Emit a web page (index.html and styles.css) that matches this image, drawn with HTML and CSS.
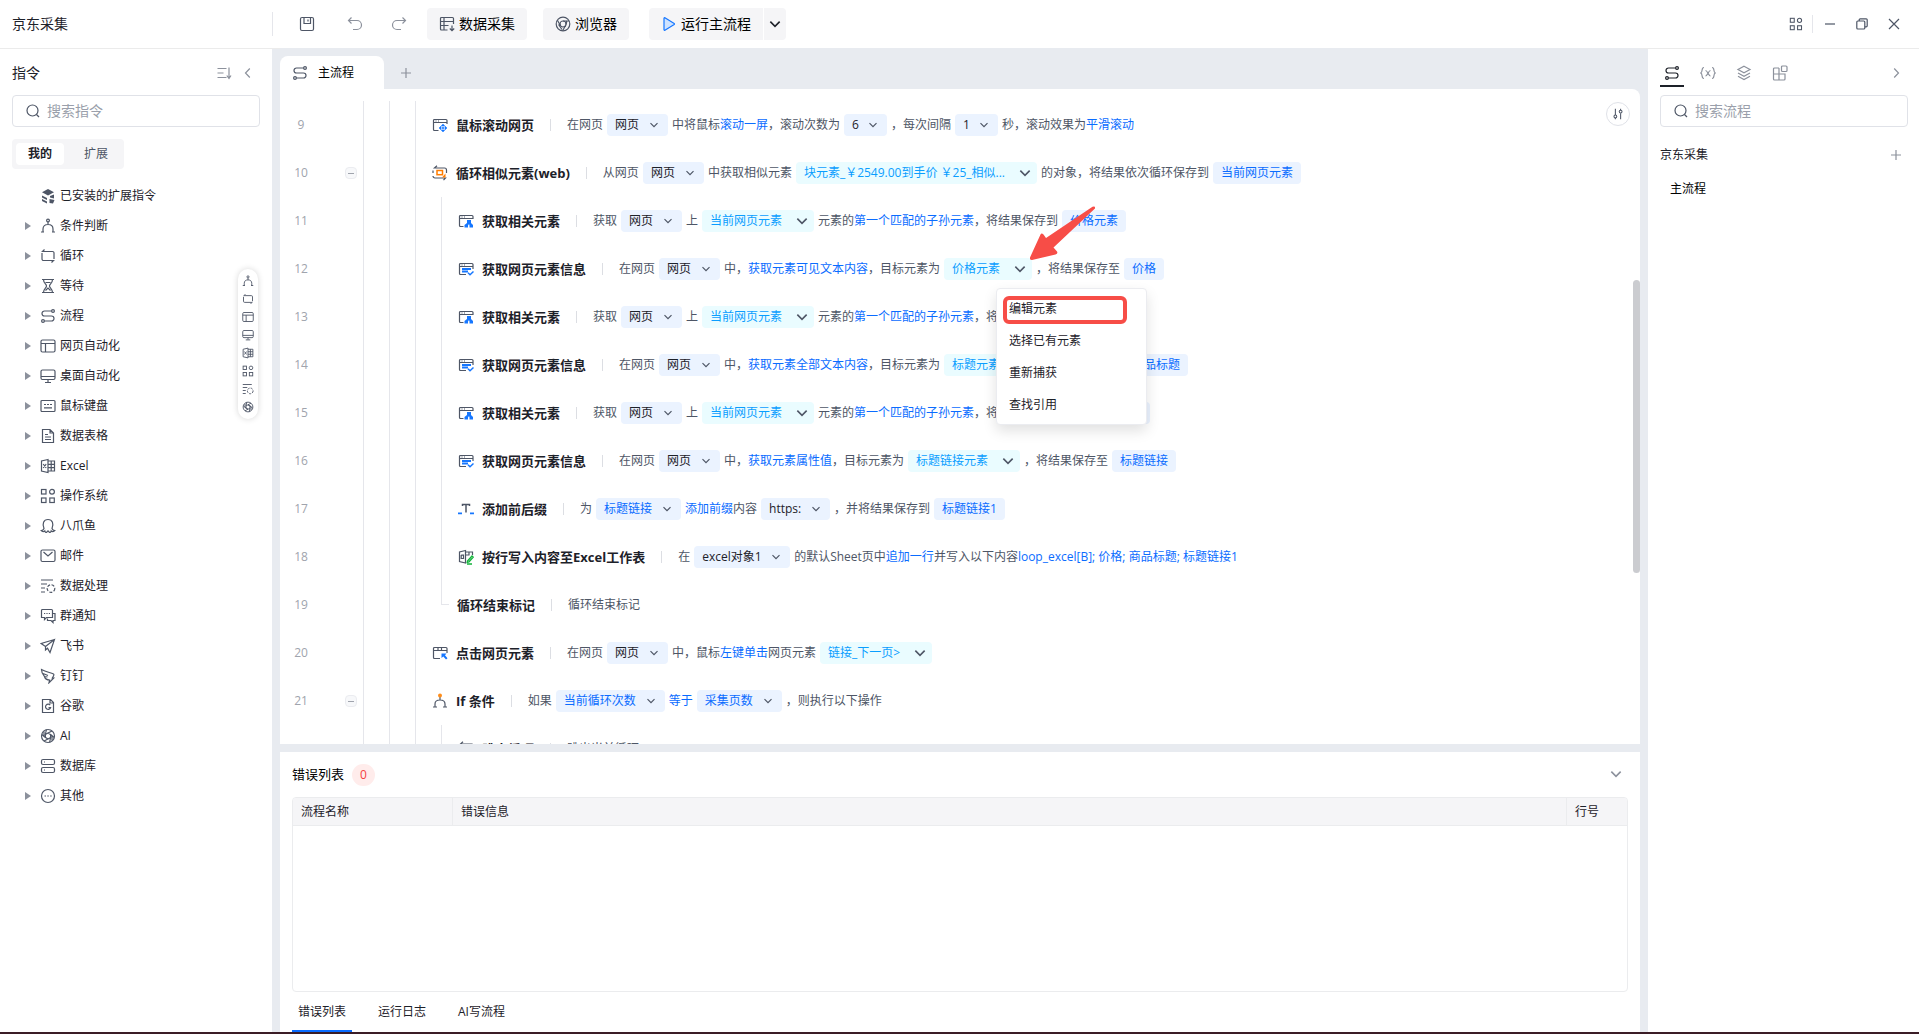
FILE: index.html
```html
<!DOCTYPE html>
<html lang="zh-CN">
<head>
    <meta charset="UTF-8">
    <meta name="viewport" content="width=device-width, initial-scale=1.0">
    <title>京东采集</title>
    <link rel="stylesheet" href="styles.css">
</head>
<body>
    <!-- icons -->
    <svg class="sprite" aria-hidden="true">
        <symbol id="i-save" viewBox="0 0 16 16"><rect x="1.5" y="1.5" width="13" height="13" rx="1.5"/><path d="M5 1.5v6h6.500v-6M9 3.500v2"/></symbol>
        <symbol id="i-undo" viewBox="0 0 16 16"><path d="M4.500 1.500L1.500 4.500l3 3M1.500 4.500h8.500a4.500 4.500 0 0 1 0 9H6"/></symbol>
        <symbol id="i-redo" viewBox="0 0 16 16"><path d="M11.500 1.500l3 3-3 3M14.500 4.500H6a4.500 4.500 0 0 0 0 9h4"/></symbol>
        <symbol id="i-collect" viewBox="0 0 16 16"><path d="M8.500 14H2.500a1 1 0 0 1-1-1V2.500a1 1 0 0 1 1-1h11a1 1 0 0 1 1 1V8M1.500 5.500h13M1.500 9.500h8M5 1.500V14M13 9.500v5M10.800 12.500l2.200 2.200 2.200-2.200"/></symbol>
        <symbol id="i-chrome" viewBox="0 0 16 16"><circle cx="8" cy="8" r="6.800"/><circle cx="8" cy="8" r="3"/><path d="M8 5h6M5.400 9.500L2.400 4.300M10.600 9.500l-3 5.200M3.500 8.500l3.500 5M12 4.500l-1 4"/></symbol>
        <symbol id="i-run" viewBox="0 0 16 16"><path d="M3 2.300v11.400a.6.6 0 0 0 .9.500l9.300-5.700a.6.6 0 0 0 0-1L3.900 1.800a.6.6 0 0 0-.9.500z" fill="#cfe3ff" stroke="#1677ff"/></symbol>
        <symbol id="i-down" viewBox="0 0 12 12"><path d="M2.500 4.200L6 7.700l3.500-3.500"/></symbol>
        <symbol id="i-left" viewBox="0 0 12 12"><path d="M7.800 1.500L3.500 6l4.300 4.500"/></symbol>
        <symbol id="i-right" viewBox="0 0 12 12"><path d="M4.200 1.500L8.500 6l-4.300 4.500"/></symbol>
        <symbol id="i-plus" viewBox="0 0 12 12"><path d="M6 1v10M1 6h10"/></symbol>
        <symbol id="i-min" viewBox="0 0 12 12"><path d="M1 6h10"/></symbol>
        <symbol id="i-restore" viewBox="0 0 12 12"><rect x=".8" y="3" width="8" height="8" rx="1"/><path d="M3.200 3V1.800a1 1 0 0 1 1-1h6a1 1 0 0 1 1 1v6a1 1 0 0 1-1 1H8.800"/></symbol>
        <symbol id="i-close" viewBox="0 0 12 12"><path d="M1 1l10 10M11 1L1 11"/></symbol>
        <symbol id="i-sort" viewBox="0 0 16 16"><path d="M1.500 3.500h9M1.500 8h6M1.500 12.500h9M13 2.500v11M10.800 10.500l2.200 3 2-3"/></symbol>
        <symbol id="i-search" viewBox="0 0 16 16"><circle cx="7.500" cy="7.500" r="5.500"/><path d="M11.500 11.500l2.500 2.500"/></symbol>
        <symbol id="i-adjust" viewBox="0 0 16 16"><path d="M5 2v7M5 12.500V14M11 7v7M11 2v1.500"/><circle cx="5" cy="10.800" r="1.600"/><circle cx="11" cy="5.200" r="1.600"/></symbol>
        <symbol id="i-var" viewBox="0 0 16 16"><path d="M4 2.500c-3 0-1 4.500-3.200 5.500C3 9 1 13.500 4 13.500M12 2.500c3 0 1 4.500 3.200 5.500C13 9 15 13.500 12 13.500M5.500 5.500c2 0 3 5.500 5 5.500M10.500 5.500c-2 0-3 5.500-5 5.500"/></symbol>
        <symbol id="i-layers" viewBox="0 0 16 16"><path d="M8 1.300l6 3.200-6 3.200-6-3.200zM2 8l6 3.200L14 8M2 11.300l6 3.200 6-3.200"/></symbol>
        <symbol id="i-blocks" viewBox="0 0 16 16"><rect x="9.500" y="1" width="5.500" height="5.500" rx="1"/><path d="M7 3H2.500a1 1 0 0 0-1 1v10a1 1 0 0 0 1 1h9.500a1 1 0 0 0 1-1V9H1.500M7 3v12"/></symbol>

        <symbol id="i-installed" viewBox="0 0 16 16"><path d="M8 1l6 3.200-6 3.200-6-3.200z" fill="currentColor" stroke="none"/><path d="M2 7.500l5 2.500v2L2 9.500zM2 11l5 2.500v2L2 13z" fill="currentColor" stroke="none"/><path d="M10 8l4-1.500v4L10 9.500zM9.500 11l5 1-1.500 3.500-3.500-.5z" fill="currentColor" stroke="none"/></symbol>
        <symbol id="i-branch" viewBox="0 0 16 16"><circle cx="8" cy="2.500" r="1.400"/><path d="M8 4v2.500M3 14v-3c0-3 2-4.500 5-4.500s5 1.500 5 4.500v3M1 14h3M12 14h3"/></symbol>
        <symbol id="i-loop" viewBox="0 0 16 16"><path d="M4.500 1.500L2.500 3.500H12.500a1.500 1.500 0 0 1 1.500 1.500v6M11.500 14.500l2-2H3.500A1.500 1.500 0 0 1 2 11V5"/></symbol>
        <symbol id="i-wait" viewBox="0 0 16 16"><path d="M2 1.500h12M2 14.500h12M3.500 1.500c0 4 3 4.500 3 6.500s-3 2.500-3 6.500M12.500 1.500c0 4-3 4.500-3 6.500s3 2.500 3 6.500M5.500 4.500h5M5.500 12.500L8 10l2.500 2.500"/></symbol>
        <symbol id="i-flow" viewBox="0 0 16 16"><circle cx="13" cy="3" r="1.400"/><circle cx="3" cy="13" r="1.400"/><path d="M11.500 3H4.500a2.500 2.500 0 0 0 0 5h7a2.500 2.500 0 0 1 0 5H4.500"/></symbol>
        <symbol id="i-web" viewBox="0 0 16 16"><rect x="1" y="2" width="14" height="12" rx="1.500"/><path d="M1 5.500h14M5.500 5.500V14"/></symbol>
        <symbol id="i-desktop" viewBox="0 0 16 16"><rect x="1" y="2" width="14" height="9.500" rx="1.500"/><path d="M1 8.500h14M8 11.500V14M5 14.500h6"/></symbol>
        <symbol id="i-keyboard" viewBox="0 0 16 16"><rect x="1" y="2.500" width="14" height="11" rx="1"/><path d="M4 6.500h2M7 6.500h2M10 6.500h2M4 9.800h8"/></symbol>
        <symbol id="i-doc" viewBox="0 0 16 16"><path d="M2.500 1.500h7.500l3.500 3.500v9.500h-11zM10 1.500V5h3.500M5 6.500h3M5 9h6M5 11.500h6"/></symbol>
        <symbol id="i-excel" viewBox="0 0 16 16"><path d="M8 1.500L1.500 3v10L8 14.500zM8 3h6.500v10H8M3.200 6l3 4M6.200 6l-3 4M8 6.300h6.500M8 9.700h6.500M11.200 3v10"/></symbol>
        <symbol id="i-grid" viewBox="0 0 16 16"><rect x="1.500" y="1.500" width="4.500" height="4.500"/><circle cx="12" cy="3.800" r="2.400"/><rect x="1.500" y="10" width="4.500" height="4.500"/><rect x="9.800" y="10" width="4.500" height="4.500"/></symbol>
        <symbol id="i-octopus" viewBox="0 0 16 16"><path d="M4 10.500C2 6 3.500 1.500 8 1.500s6 4.500 4 9c.5 1.500 1.500 2 2.800 2-1 1.500-2.800 1.200-3.600.3-.2 1-1 1.700-1.700 1.700l-1.500-1.700-1.500 1.700c-.7 0-1.500-.7-1.700-1.700-.8.900-2.600 1.200-3.600-.3 1.300 0 2.300-.5 2.800-2z"/></symbol>
        <symbol id="i-mail" viewBox="0 0 16 16"><rect x="1" y="2" width="14" height="11.500" rx="1.500"/><path d="M3.500 4L8 8l4.500-4"/></symbol>
        <symbol id="i-data" viewBox="0 0 16 16"><path d="M1 2h12M1 6h6M1 10h4M1 14h4"/><circle cx="11" cy="10.500" r="3.800" stroke-dasharray="3 1.500"/></symbol>
        <symbol id="i-chat" viewBox="0 0 16 16"><path d="M2 1.500h9.500a1 1 0 0 1 1 1v7h-6L4.500 11.500V9.500H1.500v-7zM4 5.500h1.200M6.400 5.500h1.200M8.800 5.500H10M12.500 5.500H15v7h-2v2l-2-2H7.500v-2"/></symbol>
        <symbol id="i-plane" viewBox="0 0 16 16"><path d="M14.500 1.500L1.200 5.500l4.300 3v3.500l2-1.800 2.500 4.300zM5.500 8.500l9-7"/></symbol>
        <symbol id="i-ding" viewBox="0 0 16 16"><path d="M1.500 1.500C6 4 10 4.500 13.500 6c.8.400.2 1.800-1.200 4h1.400L9 14.800l.6-2.800C5 11.800 5 10 4.500 8.500 2.500 6.500 1.500 4.500 1.500 1.500zM4.500 8.500l3 .5M3 5.500l5 2"/></symbol>
        <symbol id="i-google" viewBox="0 0 16 16"><path d="M2.500 1.500h8L13.500 4.500v10h-11zM10 1.500V5h3.500M10.200 7.200A2.600 2.600 0 1 0 10.600 9.500H8.500"/></symbol>
        <symbol id="i-ai" viewBox="0 0 16 16"><circle cx="8" cy="8" r="6.500"/><path d="M8 5l2.600 1.500v3L8 11 5.400 9.500v-3zM8 5l4-2M10.600 6.500l3.600 3M10.600 9.500l-1 5M8 11l-4 2M5.400 9.500L1.800 6.500M5.400 6.500l1-5M4 3.500v5l4 2.500M12 12.500v-5L8 5"/></symbol>
        <symbol id="i-db" viewBox="0 0 16 16"><rect x="1.500" y="1.500" width="13" height="5" rx="1.500"/><rect x="1.500" y="9.500" width="13" height="5" rx="1.500"/><path d="M4 4h1M4 12h1"/></symbol>
        <symbol id="i-more" viewBox="0 0 16 16"><circle cx="8" cy="8" r="6.500"/><path d="M4.500 8H6M7.300 8h1.500M10.200 8h1.500"/></symbol>

        <symbol id="s-scroll" viewBox="0 0 16 16"><path d="M6.500 13.500H2.500a1 1 0 0 1-1-1v-9a1 1 0 0 1 1-1h11.500a1 1 0 0 1 1 1V7M1.500 5.500H15M3.500 4h1M6 4h1"/><path d="M11 7l1.700 2H9.300zM11 15l1.700-2H9.300zM7 11l2-1.700v3.400zM15 11l-2-1.700v3.400zM10.300 10.300h1.400v1.400h-1.400z" fill="#1677ff" stroke="#1677ff" stroke-width=".6"/></symbol>
        <symbol id="s-loop" viewBox="0 0 16 16"><path d="M5 .8L2.500 3H12.500a2 2 0 0 1 2 2v3M11.500 15.200l2-2.200H3a2 2 0 0 1-2-2M1 8V5.500"/><rect x="5" y="5.500" width="5.500" height="4.200" stroke="#ff7d00" stroke-width="1.500"/><path d="M10 12.500l3.500-4v4z" fill="#ff7d00" stroke="none"/></symbol>
        <symbol id="s-related" viewBox="0 0 16 16"><path d="M5.500 13.500H2.500a1 1 0 0 1-1-1v-9a1 1 0 0 1 1-1h11.500a1 1 0 0 1 1 1V6M1.500 5.500H15M3.500 4h1M6 4h1"/><path d="M9 7h4v3l2 2v2.500h-3.500v-2L11 11l-1 1.500v2H6.500v-2.500L9 10z" fill="#1677ff" stroke="none"/></symbol>
        <symbol id="s-info" viewBox="0 0 16 16"><path d="M8 13.500H2.500a1 1 0 0 1-1-1v-9a1 1 0 0 1 1-1h11.500a1 1 0 0 1 1 1V8M1.500 5.500H15M3.500 4h1M6 4h1"/><path d="M4 8h9M4 10.500h6" stroke="#1677ff" stroke-width="1.800"/><path d="M10 11.800l2 2 3.500-3.300" stroke="#1677ff" stroke-width="1.500"/></symbol>
        <symbol id="s-text" viewBox="0 0 16 16"><path d="M4.500 5V3.500h7V5M8 3.500v8" stroke-width="1.500"/><path d="M0 12.300h4M12 12.300h4" stroke="#1677ff" stroke-width="1.800"/></symbol>
        <symbol id="s-excel" viewBox="0 0 16 16"><path d="M7.500 1.500L1.500 3v9.500l6 1.500zM7.500 3h7v3M7.500 6h4M3.200 6v3.500h2.300V6.200H3.200M11 3v3"/><path d="M9.500 12l4.500-5 1.200 1.200-4.200 4.600-1.800.5zM9 15h5" stroke="#13b33b" stroke-width="1.300"/></symbol>
        <symbol id="s-click" viewBox="0 0 16 16"><path d="M8 13.500H2.500a1 1 0 0 1-1-1v-9a1 1 0 0 1 1-1h11.500a1 1 0 0 1 1 1V8M1.500 5.500H15M6 2.500v3M9.500 2.500v3"/><path d="M9.500 8.500h5L13 10.200l2.500 3-1.500 1.300-2.700-3-1.800 1.500z" fill="#1677ff" stroke="none"/></symbol>
        <symbol id="s-if" viewBox="0 0 16 16"><path d="M8 4v3M3 14v-3c0-3 2-4 5-4s5 1 5 4v3M1 14h4M11 14h4"/><circle cx="8" cy="2.500" r="2" fill="#ff8d1a" stroke="none"/></symbol>
        <symbol id="s-break" viewBox="0 0 16 16"><path d="M5 .8L2.500 3H14v9H3"/></symbol>
    </svg>

    <header class="topbar">
        <h1 class="app-title">京东采集</h1>
        <div class="toolbar">
            <button class="icon-btn dark save" aria-label="保存"><svg class="icon"><use href="#i-save"/></svg></button>
            <button class="icon-btn" aria-label="撤销"><svg class="icon"><use href="#i-undo"/></svg></button>
            <button class="icon-btn" aria-label="重做"><svg class="icon"><use href="#i-redo"/></svg></button>
        </div>
        <button class="btn"><svg class="icon"><use href="#i-collect"/></svg>数据采集</button>
        <button class="btn"><svg class="icon"><use href="#i-chrome"/></svg>浏览器</button>
        <div class="run-group">
            <button class="btn run"><svg class="icon"><use href="#i-run"/></svg>运行主流程</button>
            <button class="btn run-more" aria-label="更多运行方式"><svg class="icon"><use href="#i-down"/></svg></button>
        </div>
        <div class="window-tools">
            <button class="icon-btn dark apps" aria-label="应用"><svg class="icon s14"><use href="#i-grid"/></svg></button>
            <button class="icon-btn dark" aria-label="最小化"><svg class="icon s12"><use href="#i-min"/></svg></button>
            <button class="icon-btn dark" aria-label="还原"><svg class="icon s12"><use href="#i-restore"/></svg></button>
            <button class="icon-btn dark" aria-label="关闭"><svg class="icon s12"><use href="#i-close"/></svg></button>
        </div>
    </header>

    <div class="workspace">
        <aside class="commands">
            <div class="panel-head">
                <h2>指令</h2>
                <button class="icon-btn" aria-label="排序"><svg class="icon"><use href="#i-sort"/></svg></button>
                <button class="icon-btn" aria-label="收起"><svg class="icon s12"><use href="#i-left"/></svg></button>
            </div>
            <label class="search"><svg class="icon"><use href="#i-search"/></svg><input type="text" placeholder="搜索指令" aria-label="搜索指令"></label>
            <div class="segment">
                <button class="active">我的</button>
                <button>扩展</button>
            </div>
            <ul class="tree">
                <li class="leaf"><button><svg class="icon"><use href="#i-installed"/></svg>已安装的扩展指令</button></li>
                <li><button><svg class="icon"><use href="#i-branch"/></svg>条件判断</button></li>
                <li><button><svg class="icon"><use href="#i-loop"/></svg>循环</button></li>
                <li><button><svg class="icon"><use href="#i-wait"/></svg>等待</button></li>
                <li><button><svg class="icon"><use href="#i-flow"/></svg>流程</button></li>
                <li><button><svg class="icon"><use href="#i-web"/></svg>网页自动化</button></li>
                <li><button><svg class="icon"><use href="#i-desktop"/></svg>桌面自动化</button></li>
                <li><button><svg class="icon"><use href="#i-keyboard"/></svg>鼠标键盘</button></li>
                <li><button><svg class="icon"><use href="#i-doc"/></svg>数据表格</button></li>
                <li><button><svg class="icon"><use href="#i-excel"/></svg>Excel</button></li>
                <li><button><svg class="icon"><use href="#i-grid"/></svg>操作系统</button></li>
                <li><button><svg class="icon"><use href="#i-octopus"/></svg>八爪鱼</button></li>
                <li><button><svg class="icon"><use href="#i-mail"/></svg>邮件</button></li>
                <li><button><svg class="icon"><use href="#i-data"/></svg>数据处理</button></li>
                <li><button><svg class="icon"><use href="#i-chat"/></svg>群通知</button></li>
                <li><button><svg class="icon"><use href="#i-plane"/></svg>飞书</button></li>
                <li><button><svg class="icon"><use href="#i-ding"/></svg>钉钉</button></li>
                <li><button><svg class="icon"><use href="#i-google"/></svg>谷歌</button></li>
                <li><button><svg class="icon"><use href="#i-ai"/></svg>AI</button></li>
                <li><button><svg class="icon"><use href="#i-db"/></svg>数据库</button></li>
                <li><button><svg class="icon"><use href="#i-more"/></svg>其他</button></li>
            </ul>
            <nav class="quick-bar" aria-label="快捷定位">
                <button aria-label="条件判断"><svg class="icon s12"><use href="#i-branch"/></svg></button>
                <button aria-label="循环"><svg class="icon s12"><use href="#i-loop"/></svg></button>
                <button aria-label="网页自动化"><svg class="icon s12"><use href="#i-web"/></svg></button>
                <button aria-label="桌面自动化"><svg class="icon s12"><use href="#i-desktop"/></svg></button>
                <button aria-label="Excel"><svg class="icon s12"><use href="#i-excel"/></svg></button>
                <button aria-label="操作系统"><svg class="icon s12"><use href="#i-grid"/></svg></button>
                <button aria-label="数据处理"><svg class="icon s12"><use href="#i-data"/></svg></button>
                <button aria-label="AI"><svg class="icon s12"><use href="#i-ai"/></svg></button>
            </nav>
        </aside>

        <main class="editor">
            <div class="file-tabs">
                <button class="file-tab"><svg class="icon"><use href="#i-flow"/></svg>主流程</button>
                <button class="icon-btn add-tab" aria-label="新建流程"><svg class="icon s12"><use href="#i-plus"/></svg></button>
            </div>

            <section class="flow">
                <button class="adjust" aria-label="显示设置"><svg class="icon s14"><use href="#i-adjust"/></svg></button>
                <div class="scrollbar"></div>
                <ol class="steps">
                    <li class="step">
                        <span class="num">9</span><span class="fold"></span><i></i><i></i><i></i>
                        <div class="body"><svg class="icon"><use href="#s-scroll"/></svg><b>鼠标滚动网页</b>
                            <div class="desc"><span>在网页</span>
                                <span class="pill"><select aria-label="网页"><option>网页</option></select><svg class="icon"><use href="#i-down"/></svg></span>
                                <span>中将鼠标<a href="#">滚动一屏</a>，滚动次数为</span>
                                <span class="pill"><select aria-label="滚动次数"><option>6</option></select><svg class="icon"><use href="#i-down"/></svg></span>
                                <span>，每次间隔</span>
                                <span class="pill"><select aria-label="间隔"><option>1</option></select><svg class="icon"><use href="#i-down"/></svg></span>
                                <span>秒，滚动效果为<a href="#">平滑滚动</a></span></div>
                        </div>
                    </li>
                    <li class="step">
                        <span class="num">10</span><span class="fold"><button aria-label="折叠"></button></span><i></i><i></i><i></i>
                        <div class="body"><svg class="icon"><use href="#s-loop"/></svg><b>循环相似元素(web)</b>
                            <div class="desc"><span>从网页</span>
                                <span class="pill"><select aria-label="网页"><option>网页</option></select><svg class="icon"><use href="#i-down"/></svg></span>
                                <span>中获取相似元素</span>
                                <button class="element">块元素_￥2549.00到手价 ￥25_相似...<svg class="icon"><use href="#i-down"/></svg></button>
                                <span>的对象，将结果依次循环保存到</span>
                                <button class="output">当前网页元素</button></div>
                        </div>
                    </li>
                    <li class="step">
                        <span class="num">11</span><span class="fold"></span><i></i><i></i><i></i><i></i>
                        <div class="body"><svg class="icon"><use href="#s-related"/></svg><b>获取相关元素</b>
                            <div class="desc"><span>获取</span>
                                <span class="pill"><select aria-label="网页"><option>网页</option></select><svg class="icon"><use href="#i-down"/></svg></span>
                                <span>上</span>
                                <button class="element">当前网页元素<svg class="icon"><use href="#i-down"/></svg></button>
                                <span>元素的<a href="#">第一个匹配的子孙元素</a>，将结果保存到</span>
                                <button class="output">价格元素</button></div>
                        </div>
                    </li>
                    <li class="step">
                        <span class="num">12</span><span class="fold"></span><i></i><i></i><i></i><i></i>
                        <div class="body"><svg class="icon"><use href="#s-info"/></svg><b>获取网页元素信息</b>
                            <div class="desc"><span>在网页</span>
                                <span class="pill"><select aria-label="网页"><option>网页</option></select><svg class="icon"><use href="#i-down"/></svg></span>
                                <span>中，<a href="#">获取元素可见文本内容</a>，目标元素为</span>
                                <div class="menu-anchor">
                                    <button class="element" aria-haspopup="menu" aria-expanded="true">价格元素<svg class="icon"><use href="#i-down"/></svg></button>
                                    <div class="menu" role="menu">
                                        <button role="menuitem">编辑元素</button>
                                        <button role="menuitem">选择已有元素</button>
                                        <button role="menuitem">重新捕获</button>
                                        <button role="menuitem">查找引用</button>
                                        <span class="mark-box"></span>
                                    </div>
                                    <svg class="mark-arrow" viewBox="0 0 66 54"><path d="M0 51.500L10.500 28.500q1-2 3 0l2.500 3.500L62.500.8q3-1.200 2.500 1.700L23.500 41.500l3.500 4q1.200 2-1.500 3L2 54q-2.500 0-2-2.500z"/></svg>
                                </div>
                                <span>，将结果保存至</span>
                                <button class="output">价格</button></div>
                        </div>
                    </li>
                    <li class="step">
                        <span class="num">13</span><span class="fold"></span><i></i><i></i><i></i><i></i>
                        <div class="body"><svg class="icon"><use href="#s-related"/></svg><b>获取相关元素</b>
                            <div class="desc"><span>获取</span>
                                <span class="pill"><select aria-label="网页"><option>网页</option></select><svg class="icon"><use href="#i-down"/></svg></span>
                                <span>上</span>
                                <button class="element">当前网页元素<svg class="icon"><use href="#i-down"/></svg></button>
                                <span>元素的<a href="#">第一个匹配的子孙元素</a>，将结果保存到</span>
                                <button class="output">标题元素</button></div>
                        </div>
                    </li>
                    <li class="step">
                        <span class="num">14</span><span class="fold"></span><i></i><i></i><i></i><i></i>
                        <div class="body"><svg class="icon"><use href="#s-info"/></svg><b>获取网页元素信息</b>
                            <div class="desc"><span>在网页</span>
                                <span class="pill"><select aria-label="网页"><option>网页</option></select><svg class="icon"><use href="#i-down"/></svg></span>
                                <span>中，<a href="#">获取元素全部文本内容</a>，目标元素为</span>
                                <button class="element">标题元素<svg class="icon"><use href="#i-down"/></svg></button>
                                <span>，将结果保存至</span>
                                <button class="output">商品标题</button></div>
                        </div>
                    </li>
                    <li class="step">
                        <span class="num">15</span><span class="fold"></span><i></i><i></i><i></i><i></i>
                        <div class="body"><svg class="icon"><use href="#s-related"/></svg><b>获取相关元素</b>
                            <div class="desc"><span>获取</span>
                                <span class="pill"><select aria-label="网页"><option>网页</option></select><svg class="icon"><use href="#i-down"/></svg></span>
                                <span>上</span>
                                <button class="element">当前网页元素<svg class="icon"><use href="#i-down"/></svg></button>
                                <span>元素的<a href="#">第一个匹配的子孙元素</a>，将结果保存到</span>
                                <button class="output">标题链接元素</button></div>
                        </div>
                    </li>
                    <li class="step">
                        <span class="num">16</span><span class="fold"></span><i></i><i></i><i></i><i></i>
                        <div class="body"><svg class="icon"><use href="#s-info"/></svg><b>获取网页元素信息</b>
                            <div class="desc"><span>在网页</span>
                                <span class="pill"><select aria-label="网页"><option>网页</option></select><svg class="icon"><use href="#i-down"/></svg></span>
                                <span>中，<a href="#">获取元素属性值</a>，目标元素为</span>
                                <button class="element">标题链接元素<svg class="icon"><use href="#i-down"/></svg></button>
                                <span>，将结果保存至</span>
                                <button class="output">标题链接</button></div>
                        </div>
                    </li>
                    <li class="step">
                        <span class="num">17</span><span class="fold"></span><i></i><i></i><i></i><i></i>
                        <div class="body"><svg class="icon"><use href="#s-text"/></svg><b>添加前后缀</b>
                            <div class="desc"><span>为</span>
                                <span class="pill var"><select aria-label="变量"><option>标题链接</option></select><svg class="icon"><use href="#i-down"/></svg></span>
                                <span><a href="#">添加前缀</a>内容</span>
                                <span class="pill"><select aria-label="前缀"><option>https:</option></select><svg class="icon"><use href="#i-down"/></svg></span>
                                <span>，并将结果保存到</span>
                                <button class="output">标题链接1</button></div>
                        </div>
                    </li>
                    <li class="step">
                        <span class="num">18</span><span class="fold"></span><i></i><i></i><i></i><i></i>
                        <div class="body"><svg class="icon"><use href="#s-excel"/></svg><b>按行写入内容至Excel工作表</b>
                            <div class="desc"><span>在</span>
                                <span class="pill"><select aria-label="Excel对象"><option>excel对象1</option></select><svg class="icon"><use href="#i-down"/></svg></span>
                                <span>的默认Sheet页中<a href="#">追加一行</a>并写入以下内容<a href="#">loop_excel[B]; 价格; 商品标题; 标题链接1</a></span></div>
                        </div>
                    </li>
                    <li class="step">
                        <span class="num">19</span><span class="fold"></span><i></i><i></i><i></i><i class="end"></i>
                        <div class="body no-icon"><b>循环结束标记</b>
                            <div class="desc"><span>循环结束标记</span></div>
                        </div>
                    </li>
                    <li class="step">
                        <span class="num">20</span><span class="fold"></span><i></i><i></i><i></i>
                        <div class="body"><svg class="icon"><use href="#s-click"/></svg><b>点击网页元素</b>
                            <div class="desc"><span>在网页</span>
                                <span class="pill"><select aria-label="网页"><option>网页</option></select><svg class="icon"><use href="#i-down"/></svg></span>
                                <span>中，鼠标<a href="#">左键单击</a>网页元素</span>
                                <button class="element">链接_下一页&gt;<svg class="icon"><use href="#i-down"/></svg></button></div>
                        </div>
                    </li>
                    <li class="step">
                        <span class="num">21</span><span class="fold"><button aria-label="折叠"></button></span><i></i><i></i><i></i>
                        <div class="body"><svg class="icon"><use href="#s-if"/></svg><b>If 条件</b>
                            <div class="desc"><span>如果</span>
                                <span class="pill var"><select aria-label="变量"><option>当前循环次数</option></select><svg class="icon"><use href="#i-down"/></svg></span>
                                <a href="#">等于</a>
                                <span class="pill var"><select aria-label="比较值"><option>采集页数</option></select><svg class="icon"><use href="#i-down"/></svg></span>
                                <span>，则执行以下操作</span></div>
                        </div>
                    </li>
                    <li class="step">
                        <span class="num">22</span><span class="fold"></span><i></i><i></i><i></i><i></i>
                        <div class="body"><svg class="icon"><use href="#s-break"/></svg><b>跳出循环</b>
                            <div class="desc"><span>跳出当前循环</span></div>
                        </div>
                    </li>
                </ol>
            </section>

            <section class="errors">
                <div class="errors-head">
                    <h2>错误列表</h2><span class="badge">0</span>
                    <button class="icon-btn" aria-label="收起"><svg class="icon"><use href="#i-down"/></svg></button>
                </div>
                <div class="table-box">
                    <table>
                        <thead>
                            <tr><th class="col-name">流程名称</th><th>错误信息</th><th class="col-line">行号</th></tr>
                        </thead>
                        <tbody></tbody>
                    </table>
                </div>
                <div class="bottom-tabs">
                    <button class="active">错误列表</button>
                    <button>运行日志</button>
                    <button>AI写流程</button>
                </div>
            </section>
        </main>

        <aside class="flows">
            <div class="side-tabs">
                <button class="active" aria-label="流程"><svg class="icon"><use href="#i-flow"/></svg></button>
                <button aria-label="变量"><svg class="icon"><use href="#i-var"/></svg></button>
                <button aria-label="元素"><svg class="icon"><use href="#i-layers"/></svg></button>
                <button aria-label="组件"><svg class="icon"><use href="#i-blocks"/></svg></button>
                <button class="collapse" aria-label="收起"><svg class="icon s12"><use href="#i-right"/></svg></button>
            </div>
            <label class="search"><svg class="icon"><use href="#i-search"/></svg><input type="text" placeholder="搜索流程" aria-label="搜索流程"></label>
            <div class="flow-group">
                <span>京东采集</span>
                <button class="icon-btn" aria-label="新建"><svg class="icon s12"><use href="#i-plus"/></svg></button>
            </div>
            <a class="flow-item" href="#">主流程</a>
        </aside>
    </div>
</body>
</html>
```
FILE: styles.css
```css
* {
    box-sizing: border-box;
}

body {
    margin: 0;
    height: 100vh;
    display: flex;
    flex-direction: column;
    font-family: "Open Sans", "Noto Sans CJK SC", sans-serif;
    font-size: 12px;
    line-height: 18px;
    color: #1d2129;
    background: #fff;
    border-bottom: 2px solid #3b1d26;
    overflow: hidden;
}

h1, h2, ul, ol {
    margin: 0;
    padding: 0;
    font-weight: normal;
    list-style: none;
}

button, select, input {
    font: inherit;
    color: inherit;
    border: 0;
    padding: 0;
    background: none;
}

button {
    display: inline-flex;
    align-items: center;
    cursor: pointer;
    white-space: nowrap;
}

a {
    color: #0a6cff;
    text-decoration: none;
}

.sprite {
    position: absolute;
    width: 0;
    height: 0;
}

.icon {
    width: 16px;
    height: 16px;
    flex: none;
    fill: none;
    stroke: currentColor;
    stroke-width: 1.2;
    color: #4e5666;
}

.s14 { width: 14px; height: 14px; }
.s12 { width: 12px; height: 12px; }

.icon-btn {
    justify-content: center;
    width: 24px;
    height: 24px;
}

.icon-btn .icon { color: #8c919c; }
.icon-btn.dark .icon { color: #4e5666; }

/* top bar */
.topbar {
    display: flex;
    align-items: center;
    height: 49px;
    flex: none;
    border-bottom: 1px solid #ebebeb;
    font-size: 14px;
}

.app-title {
    width: 273px;
    height: 24px;
    padding-left: 12px;
    border-right: 1px solid #e5e6eb;
    font-size: 14px;
    line-height: 24px;
}

.toolbar {
    display: flex;
    gap: 20px;
    margin: 0 16px 0 22px;
}

.save { margin-right: 4px; }

.btn {
    height: 32px;
    padding: 0 12px;
    gap: 4px;
    border-radius: 4px;
    background: #f5f5f7;
    color: #000;
}

.topbar > .btn { margin-right: 16px; }

.run-group {
    display: flex;
    gap: 1px;
    margin-left: 4px;
}

.run { border-radius: 4px 0 0 4px; }

.run-more {
    width: 22px;
    padding: 0;
    justify-content: center;
    border-radius: 0 4px 4px 0;
}

.run-more .icon { color: #1d2129; }

.window-tools {
    display: flex;
    align-items: center;
    gap: 8px;
    margin-left: auto;
    margin-right: 13px;
}

.window-tools .apps {
    width: 29px;
    height: 18px;
    margin-right: -3px;
    padding-right: 4px;
    border-right: 1px solid #e5e6eb;
}

/* columns */
.workspace {
    flex: 1;
    min-height: 0;
    display: grid;
    grid-template-columns: 272px minmax(0, 1fr) 271px;
    gap: 8px;
    background: #e8ebf0;
}

.commands, .flows {
    position: relative;
    padding: 0 12px;
    background: #fff;
}

.flows { padding-right: 11px; }

.panel-head {
    display: flex;
    align-items: center;
    height: 46px;
    padding-top: 2px;
}

.panel-head h2 {
    flex: 1;
    font-size: 14px;
}

.search {
    display: flex;
    align-items: center;
    height: 32px;
    padding: 0 12px;
    gap: 6px;
    border: 1px solid #e0e2e8;
    border-radius: 4px;
}

.search input {
    flex: 1;
    min-width: 0;
    outline: none;
    font-size: 14px;
}

.search input::placeholder { color: #9a9fab; }

.segment {
    display: flex;
    width: fit-content;
    height: 30px;
    margin-top: 12px;
    padding: 4px;
    gap: 8px;
    border-radius: 4px;
    background: #f5f5f7;
}

.segment button {
    width: 48px;
    justify-content: center;
    border-radius: 4px;
    color: #4e5666;
}

.segment .active {
    background: #fff;
    color: #1d2129;
    font-weight: bold;
}

.tree { margin-top: 12px; }

.tree li {
    display: flex;
    align-items: center;
    height: 30px;
    padding-left: 13px;
}

.tree li::before {
    content: "";
    margin-right: 9px;
    border: 4px solid transparent;
    border-left: 6px solid #8c919c;
    border-right: 0;
}

.tree .leaf::before { visibility: hidden; }

.tree button { gap: 4px; }

.quick-bar {
    position: absolute;
    top: 220px;
    right: 14px;
    display: flex;
    flex-direction: column;
    width: 20px;
    padding: 3px 4px;
    border-radius: 10px;
    background: #fff;
    box-shadow: 0 0 6px rgba(0, 0, 0, 0.16);
}

.quick-bar button { height: 18px; }

/* editor */
.editor {
    display: flex;
    flex-direction: column;
    min-width: 0;
    min-height: 0;
    margin-top: -1px;
    background: #e8ebf0;
}

.file-tabs {
    display: flex;
    align-items: center;
    flex: none;
    height: 41px;
    padding-top: 8px;
}

.file-tab {
    width: 104px;
    height: 33px;
    padding-left: 12px;
    gap: 10px;
    border-radius: 8px 8px 0 0;
    background: #fff;
    color: #000;
}

.add-tab { margin-left: 10px; }

.flow {
    position: relative;
    flex: 1;
    min-height: 0;
    padding-top: 12px;
    border-radius: 0 8px 0 0;
    background: #fff;
    overflow: hidden;
}

.adjust {
    position: absolute;
    top: 13px;
    right: 10px;
    width: 24px;
    height: 24px;
    justify-content: center;
    border: 1px solid #e0e2e8;
    border-radius: 50%;
    background: #fff;
}

.scrollbar {
    position: absolute;
    top: 191px;
    right: 0;
    width: 7px;
    height: 293px;
    border-radius: 4px;
    background: #cbccd0;
}

.step {
    display: flex;
    align-items: center;
    height: 48px;
}

.num {
    width: 42px;
    text-align: center;
    color: #a0a4ad;
}

.fold {
    width: 41px;
    display: flex;
    justify-content: flex-end;
    padding-right: 6px;
}

.fold button {
    width: 12px;
    height: 12px;
    justify-content: center;
    border: 1px solid #ebecf0;
    border-radius: 4px;
    background: #f7f8fa;
}

.fold button::before {
    content: "";
    width: 6px;
    height: 1px;
    background: #a0a4ad;
}

/* nesting guides */
.step i {
    flex: none;
    align-self: stretch;
    width: 26px;
    border-left: 1px solid #e5e6eb;
}

.step .end {
    align-self: flex-start;
    width: 8px;
    height: 24px;
    margin-right: 18px;
    border-bottom: 1px solid #e5e6eb;
}

.body {
    display: flex;
    align-items: center;
    margin-left: -9px;
}

.body b {
    margin-left: 8px;
    font-size: 13px;
    white-space: nowrap;
}

.no-icon { margin-left: -18px; }

.desc {
    display: flex;
    align-items: center;
    gap: 4px;
    color: #4e5666;
    white-space: nowrap;
}

.desc::before {
    content: "";
    width: 1px;
    height: 12px;
    margin: 0 12px 0 16px;
    background: #dcdee3;
}

.pill {
    display: inline-grid;
    align-items: center;
    height: 22px;
    border-radius: 4px;
    background: #ebf3ff;
    color: #1d2129;
}

.pill select, .pill .icon { grid-area: 1 / 1; }

.pill select {
    appearance: none;
    height: 22px;
    padding: 0 28px 0 8px;
}

.pill .icon {
    width: 12px;
    height: 12px;
    justify-self: end;
    margin-right: 8px;
    pointer-events: none;
}

.var select { color: #0a6cff; }

.element, .output {
    height: 22px;
    padding: 0 8px;
    border-radius: 4px;
    background: #ebf3ff;
    color: #0a6cff;
}

.element {
    gap: 12px;
    padding-right: 4px;
    background: #eafcff;
    color: #0a9eff;
}

.menu-anchor {
    position: relative;
    display: flex;
}

.menu {
    position: absolute;
    z-index: 2;
    top: 30px;
    left: 52px;
    display: flex;
    flex-direction: column;
    width: 151px;
    padding: 4px 4px 3px;
    border: 1px solid #ebecf0;
    border-radius: 4px;
    background: #fff;
    box-shadow: 0 6px 14px rgba(0, 0, 0, 0.12);
}

.menu button {
    height: 32px;
    padding-left: 8px;
    color: #1d2129;
}

/* red callouts */
.mark-box {
    position: absolute;
    top: 7px;
    left: 6px;
    width: 124px;
    height: 28px;
    border: 4px solid #f74d47;
    border-radius: 6px;
    pointer-events: none;
}

.mark-arrow {
    position: absolute;
    z-index: 2;
    top: -52px;
    left: 86px;
    width: 66px;
    height: 54px;
    fill: #f74d47;
    pointer-events: none;
}

/* error panel */
.errors {
    flex: none;
    margin-top: 8px;
    padding: 0 12px;
    background: #fff;
}

.errors-head {
    display: flex;
    align-items: center;
    height: 45px;
    padding-bottom: 2px;
}

.errors-head h2 {
    font-size: 13px;
    color: #000;
}

.badge {
    margin: 3px 0 0 8px;
    padding: 0 8px;
    border-radius: 11px;
    background: #ffeceb;
    color: #f53f3f;
    line-height: 22px;
}

.errors-head .icon-btn { margin-left: auto; }

.table-box {
    height: 195px;
    border: 1px solid #ebecee;
    border-radius: 4px;
    overflow: hidden;
}

table {
    width: 100%;
    border-collapse: separate;
    border-spacing: 0;
    table-layout: fixed;
}

th {
    height: 28px;
    padding: 0 8px;
    border-bottom: 1px solid #ebecee;
    background: #f5f5f7;
    font-weight: normal;
    text-align: left;
}

th + th { border-left: 1px solid #ebecee; }
.col-name { width: 159px; }
.col-line { width: 61px; }

.bottom-tabs {
    display: flex;
    gap: 20px;
    height: 40px;
}

.bottom-tabs button {
    padding: 0 6px;
    border-top: 2px solid transparent;
    border-bottom: 2px solid transparent;
}

.bottom-tabs .active { border-bottom-color: #0a6cff; }

/* right panel */
.side-tabs {
    display: flex;
    align-items: center;
    gap: 12px;
    height: 46px;
    padding-top: 2px;
}

.side-tabs button {
    justify-content: center;
    width: 24px;
    height: 28px;
    border-top: 2px solid transparent;
    border-bottom: 2px solid transparent;
}

.side-tabs .icon { color: #8c919c; }
.side-tabs .active { border-bottom-color: #1d2129; }
.side-tabs .active .icon { color: #1d2129; }
.side-tabs .collapse { margin-left: auto; }

.flow-group {
    display: flex;
    align-items: center;
    justify-content: space-between;
    height: 30px;
    margin-top: 13px;
}

.flow-item {
    display: block;
    margin-top: 10px;
    padding-left: 10px;
    color: #000;
}
```
